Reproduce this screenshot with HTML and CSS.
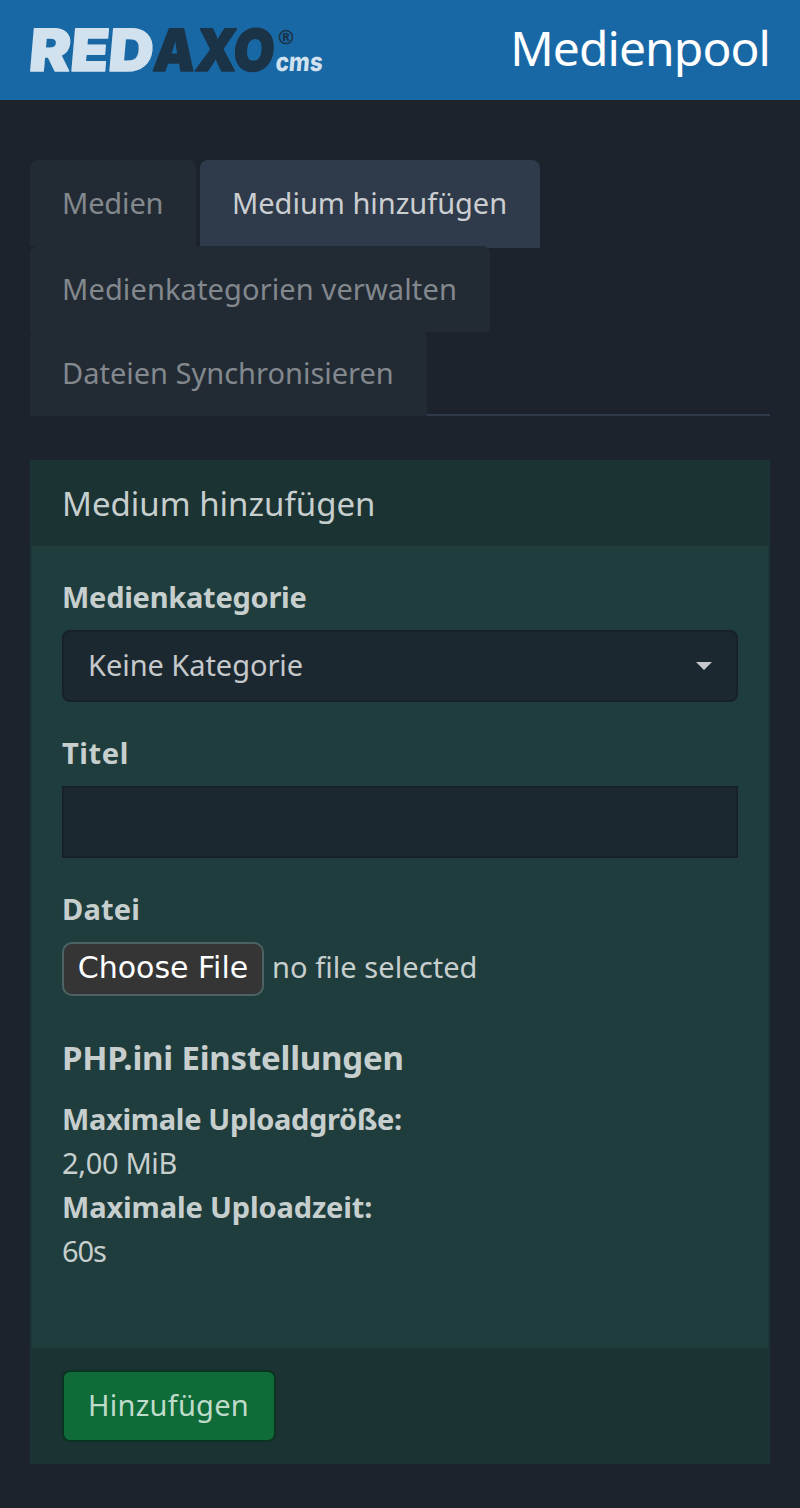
FILE: index.html
```html
<!DOCTYPE html>
<html lang="de">
<head>
<meta charset="utf-8">
<title>Medienpool</title>
<link rel="stylesheet" href="styles.css">
</head>
<body>
<header class="topbar">
  <svg class="logo" width="298" height="54" viewBox="0 0 298 54" role="img" aria-label="REDAXO cms">
    <g transform="translate(0 49) skewX(-5)">
      <text class="logo-main" x="-2" y="0" textLength="124" lengthAdjust="spacingAndGlyphs">RED</text>
      <text class="logo-main logo-dark" x="122" y="0" textLength="121" lengthAdjust="spacingAndGlyphs">AXO</text>
      <text class="logo-sub" x="245" y="0" textLength="47" lengthAdjust="spacingAndGlyphs">cms</text>
    </g>
    <text class="logo-reg" x="246" y="22">®</text>
  </svg>
  <h1 class="title">Medienpool</h1>
</header>
<main class="page">
  <nav class="tabs">
    <a class="tab tab-media">Medien</a>
    <a class="tab tab-add active">Medium hinzufügen</a>
    <a class="tab tab-categories">Medienkategorien verwalten</a>
    <a class="tab tab-sync">Dateien Synchronisieren</a>
  </nav>
  <section class="panel">
    <h2 class="panel-head">Medium hinzufügen</h2>
    <div class="panel-body">
      <div class="field">
        <div class="label label-category">Medienkategorie</div>
        <div class="control select"><span>Keine Kategorie</span><i class="caret"></i></div>
      </div>
      <div class="field">
        <div class="label label-title">Titel</div>
        <div class="control"></div>
      </div>
      <div class="field">
        <div class="label label-file">Datei</div>
        <div class="file"><button class="file-button">Choose File</button><span class="file-text">no file selected</span></div>
      </div>
      <h3 class="subhead">PHP.ini Einstellungen</h3>
      <dl class="settings">
        <dt class="size-name">Maximale Uploadgröße:</dt>
        <dd class="size-value">2,00 MiB</dd>
        <dt>Maximale Uploadzeit:</dt>
        <dd class="time-value">60s</dd>
      </dl>
    </div>
    <footer class="panel-foot"><button class="submit">Hinzufügen</button></footer>
  </section>
</main>
</body>
</html>
```
FILE: styles.css
```css
* { box-sizing: border-box; }
body { margin: 0; min-height: 1508px; background: #1c232c; color: #c7cfce; font: 29px/44px "Noto Sans", sans-serif; }

.topbar { display: flex; justify-content: space-between; height: 100px; padding: 22px 30px 0; background: #1968a6; }
.logo { overflow: visible; }
.title { margin: 4px 0 0; font-size: 48px; font-weight: 400; line-height: 44px; letter-spacing: -0.95px; color: #fff; }
.logo-main { font: 900 58px Inter, sans-serif; fill: #d2e1ee; stroke: #d2e1ee; stroke-width: 1.5px; stroke-linejoin: round; }
.logo-dark { fill: #1b3347; stroke: #1b3347; }
.logo-sub { font: 800 26px Inter, sans-serif; fill: #d2e1ee; }
.logo-reg { font: bold 20px "DejaVu Sans", sans-serif; fill: #1b3347; }

.page { padding: 60px 30px 44px; }
.tabs { display: flex; flex-wrap: wrap; align-items: flex-start; margin-bottom: 44px; border-bottom: 2px solid #2f3b4a; }
.tab { height: 86px; margin: 0 4px -2px 0; padding: 21px 0 0 32px; border-radius: 8px 8px 0 0; background: #222b34; color: #82888d; white-space: nowrap; }
.tab.active { height: 88px; background: #2f3b4a; color: #cbced1; }
.tab-media { width: 166px; letter-spacing: -0.15px; }
.tab-add { width: 340px; letter-spacing: -0.02px; }
.tab-categories { width: 460px; letter-spacing: 0.12px; }
.tab-sync { width: 397px; letter-spacing: 0; }

.panel { height: 1004px; background: #203d3d; }
.panel-head { height: 86px; margin: 0; padding: 22px 0 0 32px; background: #1c3333; font-size: 33px; font-weight: 400; letter-spacing: 0; }
.panel-body { height: 802px; padding: 30px 30px 0; border: solid #1c3535; border-width: 0 2px; }
.field { margin-bottom: 30px; }
.label { margin-bottom: 13px; font-weight: 700; line-height: 41px; }
.label-category { letter-spacing: -0.26px; }
.label-title { letter-spacing: 0.6px; }
.label-file { letter-spacing: 0.2px; }
.control { height: 72px; border: 2px solid #18202a; background: #1c2830; }
.select { display: flex; align-items: center; justify-content: space-between; padding: 0 24px; border-radius: 8px; color: #c6c9cc; letter-spacing: -0.05px; }
.select span { margin-top: -3px; }
.caret { border: solid transparent; border-width: 8px 8px 0; border-top-color: #c6c9cc; }
.file { display: flex; align-items: center; height: 54px; }
.file-button { width: 202px; height: 54px; padding: 0 0 3px; border: 2px solid #4d6363; border-radius: 10px; background: #353535; color: #fff; font: 30px/44px "DejaVu Sans", sans-serif; white-space: nowrap; }
.file-text { margin: -5px 0 0 8px; letter-spacing: 0.06px; }
.subhead { margin: 44px 0 21px; font-size: 33px; line-height: 36px; letter-spacing: -0.2px; }
.settings { margin: 0; letter-spacing: -0.14px; }
.settings dt { font-weight: 700; }
.settings dd { margin: 0; }
.settings .size-name { letter-spacing: -0.33px; }
.settings .size-value { letter-spacing: -0.34px; }
.settings .time-value { letter-spacing: -1.09px; }

.panel-foot { height: 116px; padding: 22px 32px; background: #1c3333; }
.submit { display: block; width: 214px; height: 72px; padding: 0 0 3px 24px; border: 2px solid #0a3322; border-radius: 8px; background: #0f6b38; color: #bfdccb; font: 29px/44px "Noto Sans", sans-serif; letter-spacing: 0.25px; text-align: left; }
```
